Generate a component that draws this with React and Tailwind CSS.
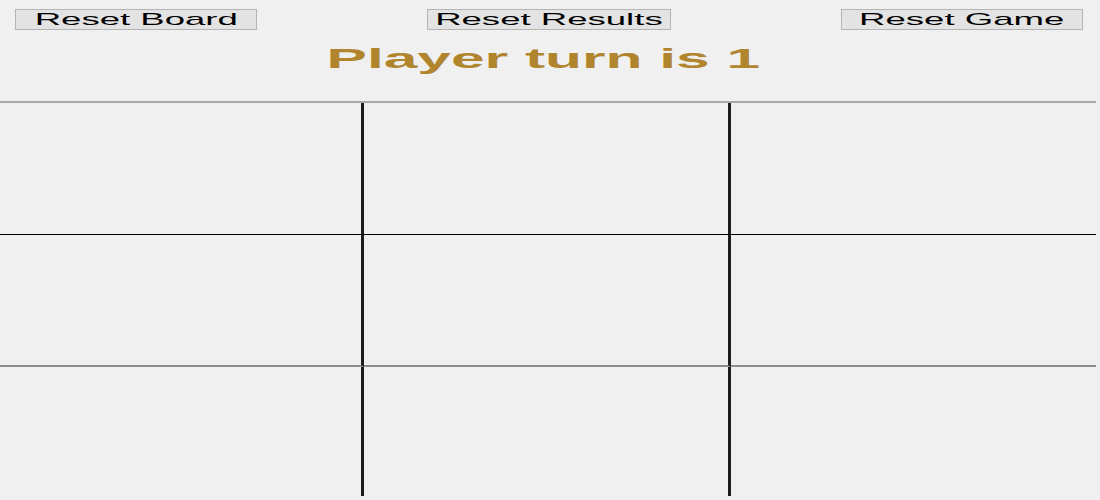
import React from 'react';

const cells = Array.from({ length: 9 }, (_, i) => i);

function ResetButton({ label, width }) {
  return (
    <button
      className={`flex h-[21px] items-center justify-center border border-[#b5b5b5] bg-[#e3e3e3] ${width}`}
    >
      <span className="inline-block origin-center scale-x-[2.15] text-[17px] leading-none text-black">
        {label}
      </span>
    </button>
  );
}

function cellClasses(i) {
  const col = i % 3;
  const row = Math.floor(i / 3);
  const classes = [row === 2 ? 'h-[129px]' : 'h-[132px]'];
  if (col < 2) classes.push('border-r-[3px] border-r-[#1c1c1c]');
  if (row === 0) classes.push('border-b border-b-black');
  if (row === 1) classes.push('border-b-2 border-b-[#8c8c8c]');
  return classes.join(' ');
}

export default function App() {
  return (
    <div className="h-[500px] w-[1100px] overflow-hidden bg-[#f0f0f0] font-['Liberation_Sans',Arial,sans-serif]">
      <div className="flex justify-between pl-[15px] pr-[17px] pt-[9px]">
        <ResetButton label="Reset Board" width="w-[242px]" />
        <ResetButton label="Reset Results" width="w-[244px]" />
        <ResetButton label="Reset Game" width="w-[242px]" />
      </div>

      <div className="mt-[15px] flex justify-center pr-[14px]">
        <h1 className="inline-block origin-center scale-x-[2.16] text-[28px] font-bold leading-none text-[#b0852e]">
          Player turn is 1
        </h1>
      </div>

      <div className="mt-[28px] grid w-[1096px] grid-cols-[364px_367px_365px] border-t-2 border-[#a8a8a8]">
        {cells.map((i) => (
          <div key={i} className={cellClasses(i)} />
        ))}
      </div>
    </div>
  );
}
